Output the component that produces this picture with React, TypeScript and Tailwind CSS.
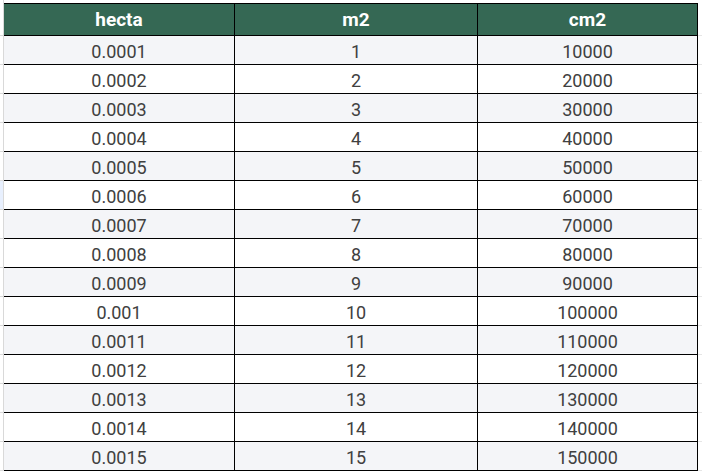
import React from 'react';

const rows = Array.from({ length: 15 }, (_, i) => {
  const n = i + 1;
  const hecta = n === 10 ? '0.001' : (n / 10000).toFixed(4);
  return { hecta, m2: String(n), cm2: String(n * 10000) };
});

const App: React.FC = () => {
  return (
    <div className="w-[702px] h-[474px] bg-white overflow-hidden font-['Roboto',sans-serif]">
      {/* spacer rows above the table */}
      <div className="flex h-[3px]">
        <div className="w-[4px] border-r border-[#d9d9d9]" />
        <div className="flex-1" />
      </div>

      {/* header */}
      <div className="flex h-[33px]">
        <div className="w-[4px] shrink-0 border-r border-b border-[#d9d9d9]" />
        <div className="grid grid-cols-[231px_243px_219px] bg-[#356854] border-t border-b border-r border-black">
          <div className="flex items-center justify-center pt-[1px] border-r border-black text-white font-bold text-[19px]">hecta</div>
          <div className="flex items-center justify-center pt-[1px] border-r border-black text-white font-bold text-[19px]">m2</div>
          <div className="flex items-center justify-center pt-[1px] text-white font-bold text-[19px]">cm2</div>
        </div>
        <div className="flex-1 border-b border-[#e6e6e6]" />
      </div>

      {rows.map((r, i) => (
        <div key={r.m2} className="flex h-[29px]">
          <div
            className={`w-[4px] shrink-0 border-r border-b border-[#d9d9d9] ${i === 5 ? 'bg-[#e8f0fe]' : ''}`}
          />
          <div
            className={`grid grid-cols-[231px_243px_219px] border-r border-b border-black text-[18px] text-[#404040] ${
              i % 2 === 0 ? 'bg-[#f4f5f8]' : 'bg-white'
            }`}
          >
            <div className="flex items-center justify-center pt-[2px] border-r border-black">{r.hecta}</div>
            <div className="flex items-center justify-center pt-[2px] border-r border-black">{r.m2}</div>
            <div className="flex items-center justify-center pt-[2px]">{r.cm2}</div>
          </div>
          <div className="flex-1 border-b border-[#e6e6e6]" />
        </div>
      ))}
    </div>
  );
};

export default App;
